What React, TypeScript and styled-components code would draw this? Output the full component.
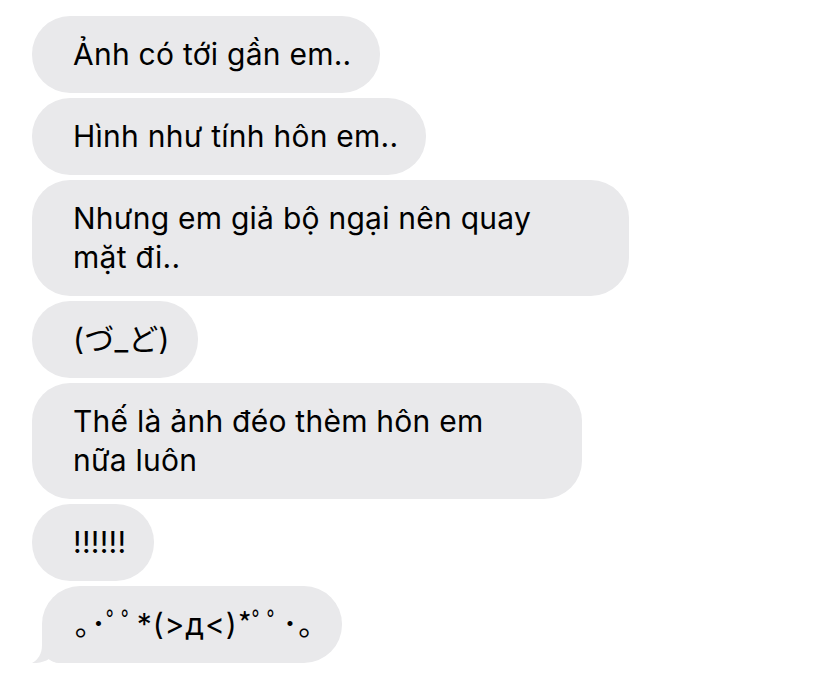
import React from "react";
import styled, { createGlobalStyle } from "styled-components";

const GlobalStyle = createGlobalStyle`
    html, body {
        margin: 0;
        padding: 0;
        background: #ffffff;
    }
`;

const Thread = styled.div`
    display: flex;
    flex-direction: column;
    align-items: flex-start;
    gap: 5px;
    padding: 16px 0 0 32px;
    font-family: "Inter", "Noto Sans CJK JP", sans-serif;
`;

const Bubble = styled.div<{ $tail?: boolean; $width?: number }>`
    position: relative;
    box-sizing: border-box;
    width: ${(p) => (p.$width ? `${p.$width}px` : "auto")};
    background: #e9e9eb;
    color: #000;
    font-size: 30px;
    letter-spacing: ${(p) => (p.$tail ? "0.9px" : "0.25px")};
    line-height: 39px;
    padding: 19px 28px 19px ${(p) => (p.$tail ? "33px" : "41px")};
    border-radius: 38px;
    white-space: pre-line;
    margin-left: ${(p) => (p.$tail ? "10px" : "0")};
    border-bottom-left-radius: ${(p) => (p.$tail ? "18px" : "38px")};
`;

const Tail = styled.svg`
    position: absolute;
    left: -10px;
    bottom: 0;
    width: 30px;
    height: 40px;
`;

type Message = { text: string; width?: number };

const messages: Message[] = [
    { text: "Ảnh có tới gần em.." },
    { text: "Hình như tính hôn em.." },
    { text: "Nhưng em giả bộ ngại nên quay\nmặt đi..", width: 597 },
    { text: "(づ_ど)" },
    { text: "Thế là ảnh đéo thèm hôn em\nnữa luôn", width: 550 },
    { text: "!!!!!!" },
    { text: "｡･ﾟﾟ*(>д<)*ﾟﾟ･｡" },
];

const App: React.FC = () => {
    return (
        <>
            <GlobalStyle />
            <Thread>
                {messages.map((m, i) => {
                    const last = i === messages.length - 1;
                    return (
                        <Bubble key={i} $tail={last} $width={m.width}>
                            {last && (
                                <Tail viewBox="0 0 30 40">
                                    <path
                                        d="M10 0 L10 22 C10 31 6 37 0 40 C7 40.5 13 38.5 17 36 C21 39 26 40 30 40 L30 0 Z"
                                        fill="#e9e9eb"
                                    />
                                </Tail>
                            )}
                            {m.text}
                        </Bubble>
                    );
                })}
            </Thread>
        </>
    );
};

export default App;
